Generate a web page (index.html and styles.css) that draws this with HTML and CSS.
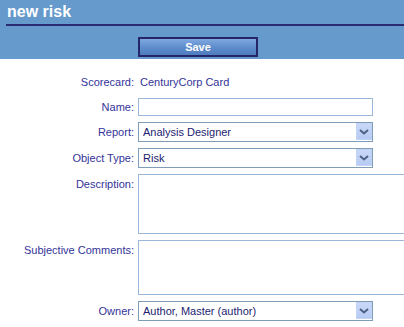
FILE: index.html
```html
<!DOCTYPE html>
<html>
<head>
<meta charset="utf-8">
<title>new risk</title>
<link rel="stylesheet" href="styles.css">
</head>
<body>
<div class="header">
  <div class="title">new risk</div>
  <div class="actions">
    <button class="save" type="button">Save</button>
  </div>
</div>
<form class="form">
  <span class="label">Scorecard:</span>
  <span class="value">CenturyCorp Card</span>

  <label class="label mid" for="name">Name:</label>
  <input id="name" class="text" type="text">

  <label class="label mid" for="report">Report:</label>
  <div class="select-wrap">
    <select id="report" class="select"><option>Analysis Designer</option></select>
    <span class="arrow"><svg width="10" height="6" viewBox="0 0 10 6"><path d="M1 1 L5 4.5 L9 1" fill="none" stroke="#4d6185" stroke-width="2"/></svg></span>
  </div>

  <label class="label mid" for="otype">Object Type:</label>
  <div class="select-wrap">
    <select id="otype" class="select"><option>Risk</option></select>
    <span class="arrow"><svg width="10" height="6" viewBox="0 0 10 6"><path d="M1 1 L5 4.5 L9 1" fill="none" stroke="#4d6185" stroke-width="2"/></svg></span>
  </div>

  <label class="label top" for="desc">Description:</label>
  <textarea id="desc" class="area desc"></textarea>

  <label class="label top" for="comments">Subjective Comments:</label>
  <textarea id="comments" class="area comments"></textarea>

  <label class="label mid" for="owner">Owner:</label>
  <div class="select-wrap">
    <select id="owner" class="select"><option>Author, Master (author)</option></select>
    <span class="arrow"><svg width="10" height="6" viewBox="0 0 10 6"><path d="M1 1 L5 4.5 L9 1" fill="none" stroke="#4d6185" stroke-width="2"/></svg></span>
  </div>
</form>
</body>
</html>
```
FILE: styles.css
```css
html, body {
  margin: 0;
  padding: 0;
  overflow: hidden;
  background: #ffffff;
  font-family: "Liberation Sans", Arial, sans-serif;
}
.header {
  background: #6699cc;
  height: 59px;
  box-sizing: border-box;
}
.title {
  margin-left: 6px;
  padding: 2px 0 3px 1px;
  line-height: 19px;
  font-size: 16px;
  font-weight: bold;
  color: #ffffff;
  border-bottom: 2px solid #2b2b74;
}
.actions {
  padding: 11px 0 0 138px;
}
.save {
  display: block;
  width: 120px;
  height: 20px;
  margin: 0;
  padding: 0;
  border: 2px solid #25256c;
  background: linear-gradient(#7fa8e0, #5d8bcb 55%, #4f7cbc);
  color: #ffffff;
  font-family: "Liberation Sans", Arial, sans-serif;
  font-size: 11px;
  font-weight: bold;
  line-height: 16px;
}
.form {
  display: grid;
  grid-template-columns: 134px auto;
  column-gap: 4px;
  row-gap: 6px;
  padding-top: 14px;
  margin: 0;
  font-size: 11px;
  color: #333399;
}
.label {
  text-align: right;
  line-height: 19px;
  white-space: nowrap;
}
.label.mid {
  align-self: center;
  line-height: 14px;
}
.label.top {
  align-self: start;
  line-height: 14px;
  padding-top: 3px;
}
.value {
  padding-left: 2px;
  line-height: 19px;
}
.text {
  width: 235px;
  height: 18px;
  box-sizing: border-box;
  margin: 0;
  border: 1px solid #9bb7dc;
  padding: 0 4px;
  font: 11px "Liberation Sans", Arial, sans-serif;
}
.select-wrap {
  position: relative;
  width: 235px;
  height: 20px;
}
.select {
  -webkit-appearance: none;
  appearance: none;
  display: block;
  width: 235px;
  height: 20px;
  box-sizing: border-box;
  margin: 0;
  border: 1px solid #7f9db9;
  border-radius: 0;
  padding: 0 20px 0 4px;
  background: #ffffff;
  color: #1c1c70;
  font: 11px "Liberation Sans", Arial, sans-serif;
}
.arrow {
  position: absolute;
  top: 1px;
  right: 1px;
  width: 16px;
  height: 17px;
  box-sizing: border-box;
  border: 1px solid #c3d3f5;
  background: linear-gradient(#c9d8f8, #b6caf3);
  display: flex;
  align-items: center;
  justify-content: center;
  pointer-events: none;
}
.area {
  width: 320px;
  box-sizing: border-box;
  margin: 0;
  border: 1px solid #9bb7dc;
  padding: 2px;
  resize: none;
  font: 11px "Liberation Sans", Arial, sans-serif;
  display: block;
}
.desc {
  height: 60px;
}
.comments {
  height: 55px;
}
```
